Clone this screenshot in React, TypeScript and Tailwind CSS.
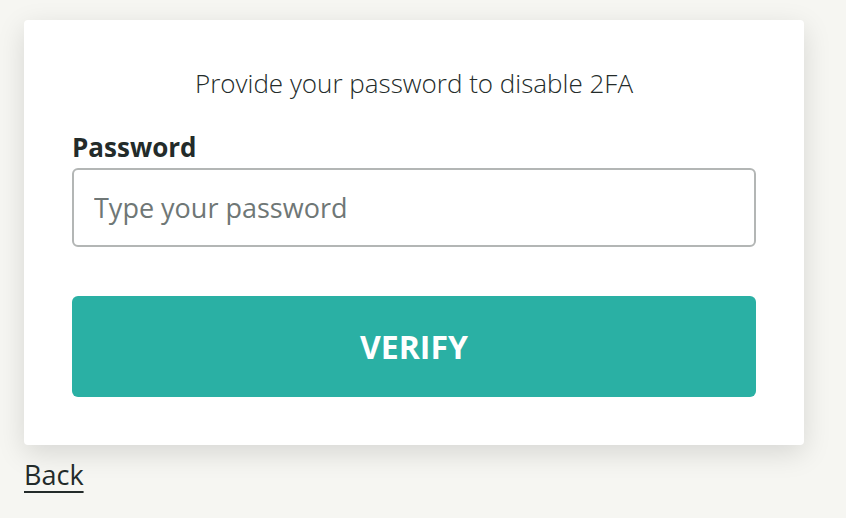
import React from 'react';

export default function App() {
  return (
    <div className="min-h-screen w-full bg-[#f6f6f2] pt-5 px-6 font-['Open_Sans','Lato',sans-serif] text-[#232b2a]">
      <div className="w-[780px] rounded bg-white px-12 pt-[46px] pb-12 shadow-[0_8px_28px_rgba(0,0,0,0.13)]">
        <p className="text-center text-[26px] font-light leading-[34px]">
          Provide your password to disable 2FA
        </p>
        <label className="mt-[31px] block text-[26px] font-bold leading-8">Password</label>
        <input
          type="password"
          placeholder="Type your password"
          className="mt-[5px] block h-[79px] w-full rounded-md border-2 border-[#b3b6b5] px-5 text-[27px] outline-none placeholder:text-[#6f7776]"
        />
        <button className="mt-[49px] flex h-[101px] w-full items-center justify-center rounded-md bg-[#2ab0a4] text-[32px] font-bold text-white">
          VERIFY
        </button>
      </div>
      <a href="#" className="mt-[14px] inline-block text-[27px] leading-8 underline underline-offset-[6px]">
        Back
      </a>
    </div>
  );
}
